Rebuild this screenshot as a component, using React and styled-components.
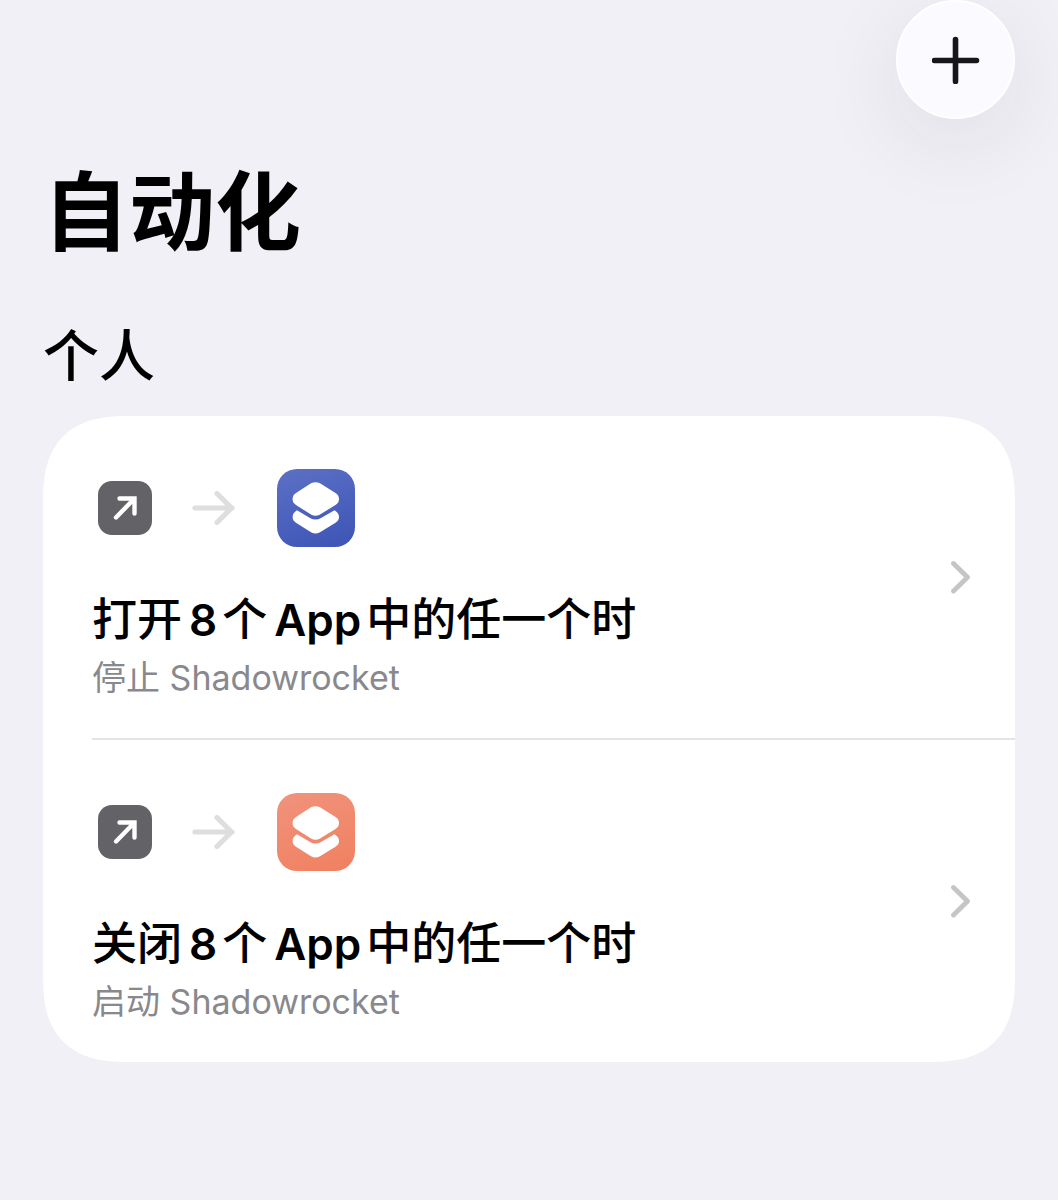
import React from 'react';
import styled, { createGlobalStyle } from 'styled-components';

const GlobalStyle = createGlobalStyle`
  *, *::before, *::after {
    box-sizing: border-box;
  }

  body {
    margin: 0;
    background: #f1f0f6;
    color: #000;
    font-family: Inter, 'Noto Sans CJK SC', sans-serif;
  }
`;

const Page = styled.div`
  min-height: 100vh;
  padding: 0 43px 60px;
`;

const Toolbar = styled.header`
  display: flex;
  justify-content: flex-end;
`;

const AddButton = styled.button`
  display: flex;
  align-items: center;
  justify-content: center;
  width: 119px;
  height: 119px;
  padding: 0;
  border: 2px solid #fff;
  border-radius: 50%;
  background: #fbfaff;
  box-shadow: 0 22px 90px rgba(30, 30, 50, 0.09);
  color: #17171b;
  cursor: pointer;
`;

const Title = styled.h1`
  margin: 42px 0 0;
  font-size: 86px;
  line-height: 104px;
  font-weight: 700;
`;

const SectionTitle = styled.h2`
  margin: 58px 0 27px;
  font-size: 56px;
  line-height: 66px;
  font-weight: 500;
`;

const Card = styled.ul`
  margin: 0;
  padding: 0 0 0 49px;
  list-style: none;
  background: #fff;
  border-radius: 72px;
  overflow: hidden;

  @supports (corner-shape: superellipse(1.4)) {
    border-radius: 88px;
    corner-shape: superellipse(1.4);
  }
`;

const Item = styled.li`
  & + & {
    border-top: 2px solid #e3e3e8;
  }
`;

const RowButton = styled.button`
  display: flex;
  align-items: center;
  justify-content: space-between;
  width: 100%;
  padding: 32px 44px 32px 0;
  border: 0;
  background: none;
  color: inherit;
  font: inherit;
  text-align: left;
  cursor: pointer;
`;

const Details = styled.span`
  display: flex;
  flex-direction: column;
  padding-top: 21px;
`;

const Flow = styled.span`
  display: flex;
  align-items: center;
  padding-left: 6px;
  margin-bottom: 43px;
`;

const TriggerIcon = styled.span`
  display: flex;
  width: 54px;
  height: 54px;
  border-radius: 14px;
  background: #636267;
`;

const ArrowSlot = styled.span`
  display: flex;
  margin: 0 42px 0 40px;
`;

const ShortcutIcon = styled.span`
  display: flex;
  width: 78px;
  height: 78px;
  border-radius: 20px;
  background: linear-gradient(160deg, ${(props) => props.$from}, ${(props) => props.$to});
`;

const RowTitle = styled.span`
  font-size: 45px;
  line-height: 60px;
  font-weight: 500;
`;

const Latin = styled.span`
  margin: 0 5px 0 7px;
  font-size: 44px;
  font-weight: 600;
`;

const RowSubtitle = styled.span`
  font-size: 34px;
  line-height: 56px;
  color: #88888d;
`;

const automations = [
  { id: 1, action: '打开', subtitle: '停止 Shadowrocket', from: '#5c70c4', to: '#3d54b6' },
  { id: 2, action: '关闭', subtitle: '启动 Shadowrocket', from: '#f0937d', to: '#f0805f' },
];

const PlusGlyph = () => (
  <svg width="48" height="48" viewBox="0 0 48 48" stroke="currentColor" strokeWidth="5.6" strokeLinecap="round" aria-hidden="true">
    <path d="M23.500 3.500v42M2.500 24.500h42" />
  </svg>
);

const OpenGlyph = () => (
  <svg width="54" height="54" viewBox="0 0 54 54" fill="none" stroke="#fff" strokeWidth="4.4" strokeLinecap="round" strokeLinejoin="miter" aria-hidden="true">
    <path d="M21.5 17.500H36.500V32.500M36 18L18 36.500" />
  </svg>
);

const ArrowGlyph = () => (
  <svg width="43" height="36" viewBox="0 0 43 36" fill="none" stroke="#dedede" strokeWidth="5.2" strokeLinecap="round" strokeLinejoin="round" aria-hidden="true">
    <path d="M3 18h37M25 3.500L39.500 18L25 32.500" />
  </svg>
);

const ShortcutGlyph = () => (
  <svg width="78" height="78" viewBox="0 0 78 78" fill="#fff" aria-hidden="true">
    <path d="M34 14.300Q38.500 12 43 14.300L58.500 24Q62 26.200 62 30Q62 33.800 58.500 36L43 45.500Q38.500 48 34 45.500L19 36Q15.600 33.800 15.600 30Q15.600 26.200 19 24Z" />
    <path d="M20 41.300L33 49Q38.500 52 44 49L57.500 41.300Q62 44 62 48Q62 51.500 58.500 53.800L43 63.200Q38.500 66 34 63.200L19 53.800Q15.600 51.500 15.600 48Q15.600 44 20 41.300Z" />
  </svg>
);

const Chevron = () => (
  <svg width="22" height="34" viewBox="0 0 22 34" fill="none" stroke="#c5c5c7" strokeWidth="4.8" strokeLinecap="round" strokeLinejoin="round" aria-hidden="true">
    <path d="M4.500 3.500L18.500 17.200L4.500 31" />
  </svg>
);

const AutomationRow = ({ item }) => (
  <Item>
    <RowButton type="button">
      <Details>
        <Flow>
          <TriggerIcon>
            <OpenGlyph />
          </TriggerIcon>
          <ArrowSlot>
            <ArrowGlyph />
          </ArrowSlot>
          <ShortcutIcon $from={item.from} $to={item.to}>
            <ShortcutGlyph />
          </ShortcutIcon>
        </Flow>
        <RowTitle>
          {item.action}
          <Latin>8</Latin>个<Latin>App</Latin>中的任一个时
        </RowTitle>
        <RowSubtitle>{item.subtitle}</RowSubtitle>
      </Details>
      <Chevron />
    </RowButton>
  </Item>
);

const App = () => {
  return (
    <>
      <GlobalStyle />
      <Page lang="zh-CN">
        <Toolbar>
          <AddButton type="button" aria-label="添加自动化">
            <PlusGlyph />
          </AddButton>
        </Toolbar>
        <main>
          <Title>自动化</Title>
          <SectionTitle>个人</SectionTitle>
          <Card>
            {automations.map((item) => (
              <AutomationRow item={item} key={item.id} />
            ))}
          </Card>
        </main>
      </Page>
    </>
  );
};

export default App;
